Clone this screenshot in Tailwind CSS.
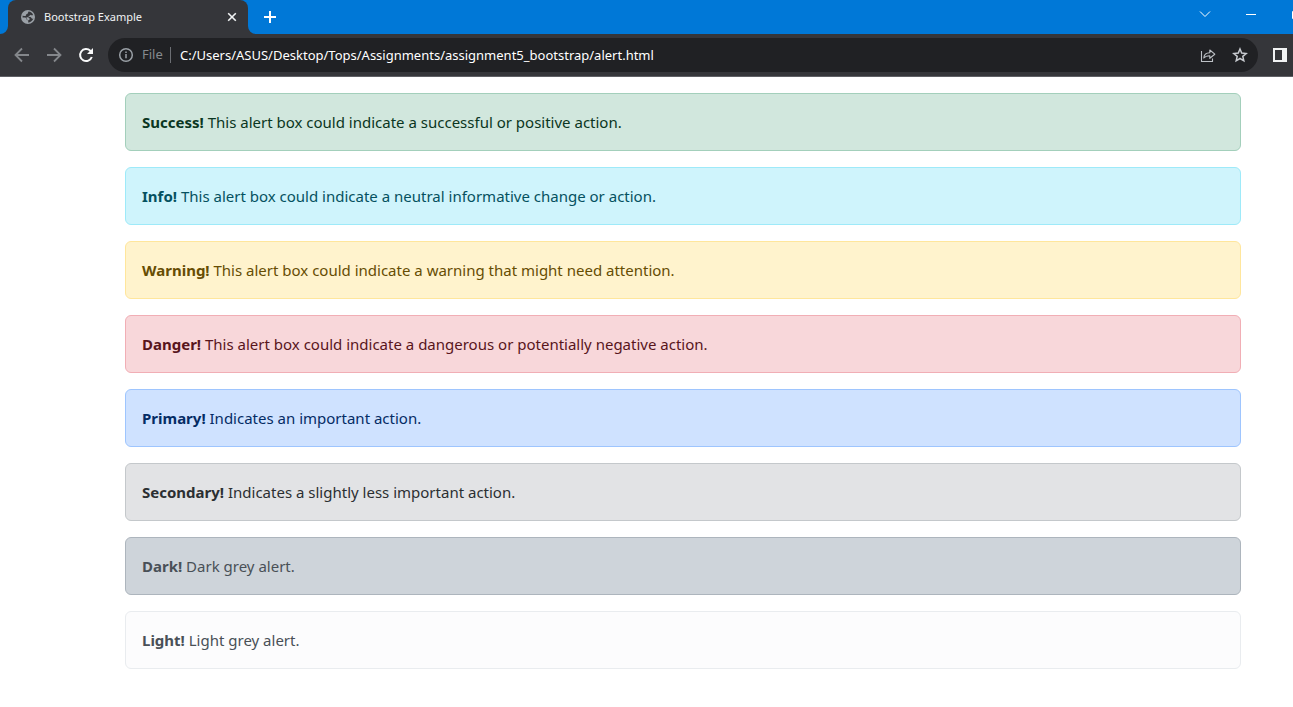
<!DOCTYPE html>
<html lang="en">
<head>
<meta charset="utf-8">
<title>Bootstrap Example</title>
<script src="https://cdn.jsdelivr.net/npm/@tailwindcss/browser@4"></script>
</head>
<body class="min-h-screen overflow-x-hidden bg-white font-['Segoe_UI','Noto_Sans',sans-serif]">
<header>
  <div class="flex h-[34px] overflow-hidden bg-[#0078d7] text-white">
    <div class="relative ml-2 flex w-60 shrink-0 items-center rounded-t-lg bg-[#35363a] pr-2 pl-3">
      <svg class="absolute bottom-0 -left-2 size-2" viewBox="0 0 8 8" fill="#35363a" aria-hidden="true"><path d="M8 0v8H0a8 8 0 0 0 8-8z"/></svg>
      <svg class="absolute -right-2 bottom-0 size-2" viewBox="0 0 8 8" fill="#35363a" aria-hidden="true"><path d="M0 0v8h8a8 8 0 0 1-8-8z"/></svg>
      <svg class="size-4 shrink-0" viewBox="0 0 16 16" aria-hidden="true">
        <circle cx="8" cy="8" r="7" fill="#9aa0a6"/>
        <path fill="#35363a" d="M8.500 2.600c2.100.2 3.900 1.500 4.600 3.300-.8.900-1.900.3-2.500-.1-.5 1-1.500 1.100-2.300 1.300.2.900 1.100.8 2 1 1.100.2.900 1.500 1.900 1.600.5 0 .8-.2 1.200-.3-.8 2.300-2.900 3.900-5.300 4 .1-.9.500-1.500-.2-2.100-.8-.5-1.500-.6-1.500-1.600-.1-1-1-1.300-1.900-1.300H2.600c-.1-.7 0-1.300.2-1.900.8.500 2.200.8 3 .2.500-.5.200-1.200.9-1.600.5-.3 1-.2 1.100-.9z"/>
        <path fill="#9aa0a6" d="M6.500 8.300c1.300-.3 2.600.2 3 1.300.4.900 0 1.500-.8 1.600-1.300.1-2.400-1.300-2.200-2.900z"/>
      </svg>
      <h1 class="ml-2 flex-1 truncate text-[11px] leading-4 font-normal text-[#f1f3f4]">Bootstrap Example</h1>
      <button type="button" aria-label="Close tab" class="flex size-4 items-center justify-center">
        <svg class="size-4" viewBox="0 0 16 16" fill="none" stroke="#f1f3f4" stroke-width="1.600"><path d="m4.200 4.200 7.600 7.600m0-7.600-7.600 7.600"/></svg>
      </button>
    </div>
    <button type="button" aria-label="New tab" class="ml-3 flex w-5 items-center justify-center">
      <svg class="size-4" viewBox="0 0 16 16" fill="none" stroke="#fff" stroke-width="2"><path d="M8 2v12M2 8h12"/></svg>
    </button>
    <div class="-mr-[21px] ml-auto flex h-7 shrink-0 items-center">
      <button type="button" aria-label="Search tabs" class="flex w-[46px] justify-center">
        <svg class="h-3 w-3" viewBox="0 0 12 12" fill="none" stroke="#fff" stroke-width="1"><path d="m1 3.500 5 5 5-5"/></svg>
      </button>
      <button type="button" aria-label="Minimize" class="flex w-[46px] justify-center">
        <svg class="h-3 w-3" viewBox="0 0 12 12" fill="none" stroke="#fff"><path d="M1 6.500h10"/></svg>
      </button>
      <button type="button" aria-label="Maximize" class="flex w-10 justify-center">
        <svg class="h-3 w-3" viewBox="0 0 12 12" fill="none" stroke="#fff"><path d="M4.500 3.500h7v7h-7z"/></svg>
      </button>
    </div>
  </div>
  <div class="flex h-[43px] items-center border-b border-[#5f6065] bg-[#35363a] pr-[5px]">
    <div class="flex w-[108px] shrink-0 gap-4 pl-[14px]">
      <button type="button" aria-label="Back"><svg class="size-4" viewBox="0 0 16 16" fill="none" stroke="#84878b" stroke-width="1.800"><path d="M15 8H2.200M8 1.500 1.500 8 8 14.500"/></svg></button>
      <button type="button" aria-label="Forward"><svg class="size-4" viewBox="0 0 16 16" fill="none" stroke="#84878b" stroke-width="1.800"><path d="M1 8h12.800M8 1.500 14.500 8 8 14.500"/></svg></button>
      <button type="button" aria-label="Reload"><svg class="size-4" viewBox="0 0 16 16" fill="none" stroke="#f8f9fa" stroke-width="2"><path d="M13.800 10A6 6 0 1 1 12.300 3.700L13 4.400"/><path d="M15 1v6H9z" fill="#f8f9fa" stroke="none"/></svg></button>
    </div>
    <div class="flex h-[34px] flex-1 items-center rounded-full bg-[#202124] px-[10px] text-[13px]">
      <svg class="size-4 shrink-0" viewBox="0 0 16 16" fill="none" stroke="#9aa0a6" stroke-width="1.500" aria-hidden="true"><circle cx="8" cy="8" r="6.300"/><path d="M8 7v4.300M8 4.500v1.600"/></svg>
      <span class="ml-2 w-7 text-[#868a8f]">File</span>
      <span class="h-4 w-px bg-[#6b6e73]"></span>
      <input aria-label="Address" type="text" value="C:/Users/ASUS/Desktop/Tops/Assignments/assignment5_bootstrap/alert.html" class="ml-[9px] h-6 min-w-0 flex-1 bg-transparent text-[13px] text-white outline-none">
      <button type="button" aria-label="Share" class="ml-4"><svg class="size-4" viewBox="0 0 16 16" fill="none" stroke="#bdc1c6" stroke-width="1.100"><path d="M1.500 4v10.500h11V11.500"/><path stroke-linejoin="round" d="M3.800 11c.2-3.500 2.600-5.200 6-5.300V3l5 4.200-5 4.100V8.700c-2.500 0-4.500.4-6 2.300z"/></svg></button>
      <button type="button" aria-label="Bookmark this page" class="ml-4"><svg class="size-4" viewBox="0 0 16 16" fill="none" stroke="#c8cbd0" stroke-width="1.500"><path d="m8 2 1.700 4.100 4.500.4-3.400 2.900 1 4.400L8 11.500l-3.800 2.300 1-4.400L1.800 6.500l4.500-.4z"/></svg></button>
    </div>
    <button type="button" aria-label="Side panel" class="ml-[14px] shrink-0"><svg class="size-4" viewBox="0 0 16 16" fill="#f1f3f4" fill-rule="evenodd"><path d="M1 1h14v14H1zM3 3v10h7V3z"/></svg></button>
  </div>
</header>
<main class="flex flex-col gap-4 pt-4 pr-[52px] pb-8 pl-[125px] text-[15px] leading-6">
  <div role="alert" class="rounded-md border border-[#a3cfbb] bg-[#d1e7dd] p-4 text-[#0a3622]"><strong>Success!</strong> This alert box could indicate a successful or positive action.</div>
  <div role="alert" class="rounded-md border border-[#9eeaf9] bg-[#cff4fc] p-4 text-[#055160]"><strong>Info!</strong> This alert box could indicate a neutral informative change or action.</div>
  <div role="alert" class="rounded-md border border-[#ffe69c] bg-[#fff3cd] p-4 text-[#664d03]"><strong>Warning!</strong> This alert box could indicate a warning that might need attention.</div>
  <div role="alert" class="rounded-md border border-[#f1aeb5] bg-[#f8d7da] p-4 text-[#58151c]"><strong>Danger!</strong> This alert box could indicate a dangerous or potentially negative action.</div>
  <div role="alert" class="rounded-md border border-[#9ec5fe] bg-[#cfe2ff] p-4 text-[#052c65]"><strong>Primary!</strong> Indicates an important action.</div>
  <div role="alert" class="rounded-md border border-[#c4c8cb] bg-[#e2e3e5] p-4 text-[#2b2f32]"><strong>Secondary!</strong> Indicates a slightly less important action.</div>
  <div role="alert" class="rounded-md border border-[#adb5bd] bg-[#ced4da] p-4 text-[#495057]"><strong>Dark!</strong> Dark grey alert.</div>
  <div role="alert" class="rounded-md border border-[#e9ecef] bg-[#fcfcfd] p-4 text-[#495057]"><strong>Light!</strong> Light grey alert.</div>
</main>
</body>
</html>
